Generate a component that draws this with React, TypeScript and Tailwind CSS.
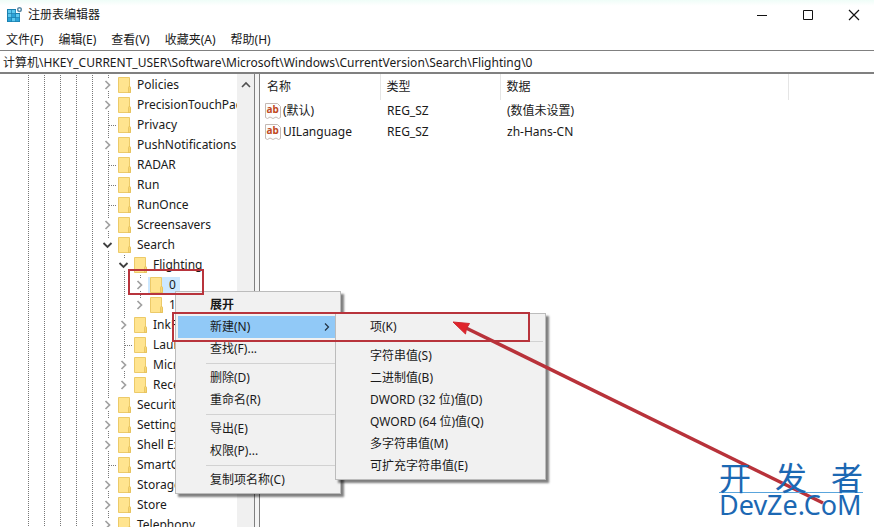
import { clsx } from "clsx";

type TreeNode = {
  name: string;
  level: number;
  state?: "open" | "closed";
  selected?: boolean;
  last?: boolean;
};

type MenuEntry = {
  label: string;
  bold?: boolean;
  active?: boolean;
  submenu?: boolean;
} | null;

const menuBar = ["文件(F)", "编辑(E)", "查看(V)", "收藏夹(A)", "帮助(H)"];

const nodes: TreeNode[] = [
  { name: "Policies", level: 5, state: "closed" },
  { name: "PrecisionTouchPad", level: 5, state: "closed" },
  { name: "Privacy", level: 5 },
  { name: "PushNotifications", level: 5, state: "closed" },
  { name: "RADAR", level: 5 },
  { name: "Run", level: 5 },
  { name: "RunOnce", level: 5 },
  { name: "Screensavers", level: 5, state: "closed" },
  { name: "Search", level: 5, state: "open" },
  { name: "Flighting", level: 6, state: "open" },
  { name: "0", level: 7, state: "closed", selected: true },
  { name: "1", level: 7, state: "closed", last: true },
  { name: "InkReco", level: 6, state: "closed" },
  { name: "Launch", level: 6 },
  { name: "Microsoft", level: 6, state: "closed" },
  { name: "RecentApps", level: 6, state: "closed", last: true },
  { name: "Security", level: 5, state: "closed" },
  { name: "Settings", level: 5, state: "closed" },
  { name: "Shell Ext", level: 5, state: "closed" },
  { name: "SmartGlass", level: 5 },
  { name: "Storage", level: 5, state: "closed" },
  { name: "Store", level: 5, state: "closed" },
  { name: "Telephony", level: 5, state: "closed" },
];

const values = [
  { name: "(默认)", type: "REG_SZ", data: "(数值未设置)" },
  { name: "UILanguage", type: "REG_SZ", data: "zh-Hans-CN" },
];

// null is a separator
const keyMenu: MenuEntry[] = [
  { label: "展开", bold: true },
  { label: "新建(N)", active: true, submenu: true },
  { label: "查找(F)..." },
  null,
  { label: "删除(D)" },
  { label: "重命名(R)" },
  null,
  { label: "导出(E)" },
  { label: "权限(P)..." },
  null,
  { label: "复制项名称(C)" },
];

const newMenu: MenuEntry[] = [
  { label: "项(K)" },
  null,
  { label: "字符串值(S)" },
  { label: "二进制值(B)" },
  { label: "DWORD (32 位)值(D)" },
  { label: "QWORD (64 位)值(Q)" },
  { label: "多字符串值(M)" },
  { label: "可扩充字符串值(E)" },
];

function RegeditIcon() {
  return (
    <svg className="size-4" viewBox="0 0 16 16">
      <path d="M0 2h9v4h4v9H0z" fill="#1a7fae" />
      <path
        d="M1 3h3.300v3.300H1zM5 3h3.300v3.300H5zM1 7h3.300v3.300H1zM9 7h3.300v3.300H9zM5 11h3.300v3.300H5z"
        fill="#5cc8ee"
      />
      <path d="M5 7h3.300v3.300H5zM1 11h3.300v3.300H1zM9 11h3.300v3.300H9z" fill="#2ba3d8" />
      <circle cx="12.500" cy="2.600" r="1.800" fill="#fff" stroke="#5c8ba6" strokeWidth="1.500" />
    </svg>
  );
}

function FolderIcon() {
  return (
    <svg className="h-4 w-[13px] shrink-0" viewBox="0 0 13 16">
      <path d="M.5.500h11v9.500l1 .5v5H.5z" fill="#ffe48f" stroke="#ecca69" />
      <path d="M10.500 15.500v-5l1-1.500 1 1.500v5z" fill="#f8d673" stroke="#e3bd58" strokeWidth=".7" />
    </svg>
  );
}

function StringValueIcon() {
  return (
    <svg className="size-4 shrink-0" viewBox="0 0 16 16">
      <path
        d="M.5.500h12l3 3v11l-2 1-2.500-1.500-3 1.500-3-1.500-2.500 1.500-2-1z"
        fill="#fdfdfd"
        stroke="#c4b9b4"
      />
      <text
        x="1.500"
        y="10"
        fill="#c14a22"
        fontSize="10"
        fontWeight="700"
        fontFamily="Noto Sans, sans-serif"
      >
        ab
      </text>
    </svg>
  );
}

function Guide() {
  return (
    <svg className="h-5 w-4 shrink-0" viewBox="0 0 16 20">
      <path d="M8.500 0v20" stroke="#777" strokeDasharray="1 1" />
    </svg>
  );
}

// the branch of the last child has no line below it
function Expander({ state, last }: Pick<TreeNode, "state" | "last">) {
  if (!state) {
    return (
      <svg className="h-5 w-4 shrink-0" viewBox="0 0 16 20">
        <path d="M8.500 0v20M9 10.500h7" fill="none" stroke="#777" strokeDasharray="1 1" />
      </svg>
    );
  }
  return (
    <svg className="h-5 w-4 shrink-0" viewBox="0 0 16 20" fill="none">
      <path
        d={last ? "M8.500 0v4" : "M8.500 0v4M8.500 16v4"}
        stroke="#777"
        strokeDasharray="1 1"
      />
      {state === "open" ? (
        <path d="m3.500 8 4 4 4-4" stroke="#404040" strokeWidth="1.800" />
      ) : (
        <path d="m5.500 6 4 4-4 4" stroke="#a0a0a0" strokeWidth="1.700" />
      )}
    </svg>
  );
}

function TreeRow({ node }: { node: TreeNode }) {
  const guides = Array.from({ length: node.level });
  return (
    <li
      role="treeitem"
      aria-selected={!!node.selected}
      className="flex h-5 items-center whitespace-nowrap"
    >
      {guides.map((_, i) => (
        <Guide key={i} />
      ))}
      <Expander state={node.state} last={node.last} />
      <span
        className={clsx(
          "flex items-center gap-1.5 pr-1 pl-0.5",
          node.selected && "bg-[#cce8ff]"
        )}
      >
        <FolderIcon />
        <span className="leading-4">{node.name}</span>
      </span>
    </li>
  );
}

function Menu({ entries, className }: { entries: MenuEntry[]; className: string }) {
  return (
    <ul
      role="menu"
      className={clsx(
        "absolute border border-[#bcbcbc] bg-[#f1f1f1] p-0.5 shadow-[3px_3px_2px_#00000080]",
        className
      )}
    >
      {entries.map((entry, i) =>
        entry ? (
          <li key={i} role="none">
            <button
              type="button"
              role="menuitem"
              className={clsx(
                "flex h-[22px] w-full items-center justify-between pr-1.5 pl-8 whitespace-nowrap",
                entry.bold && "font-bold",
                entry.active && "bg-[#91c9f7]"
              )}
            >
              {entry.label}
              {entry.submenu && (
                <svg className="size-2.5" viewBox="0 0 10 10" fill="none">
                  <path d="m3 1.500 3.500 3.500L3 8.500" stroke="#234" strokeWidth="1.200" />
                </svg>
              )}
            </button>
          </li>
        ) : (
          <li key={i} role="separator" className="ml-7 py-[3px]">
            <div className="h-px bg-[#d2d2d2]" />
          </li>
        )
      )}
    </ul>
  );
}

export default function App() {
  return (
    <div className="relative flex h-screen flex-col overflow-hidden bg-white font-['Noto_Sans','Noto_Sans_CJK_SC',sans-serif] text-xs text-[#1a1a1a]">
      <header className="flex h-[29px] shrink-0 items-center bg-linear-to-b from-[#effdf8] to-white to-20% pl-[7px]">
        <RegeditIcon />
        <h1 className="ml-[5px] grow">注册表编辑器</h1>
        <div className="flex gap-1.5">
          <button type="button" aria-label="最小化" className="flex h-7 w-10 items-center justify-center">
            <svg className="size-3" viewBox="0 0 12 12">
              <path d="M1 6.500h10" stroke="#111" />
            </svg>
          </button>
          <button type="button" aria-label="最大化" className="flex h-7 w-10 items-center justify-center">
            <svg className="size-3" viewBox="0 0 12 12">
              <path d="M1.500 1.500h9v9h-9z" fill="none" stroke="#111" />
            </svg>
          </button>
          <button type="button" aria-label="关闭" className="flex h-7 w-10 items-center justify-center">
            <svg className="size-3" viewBox="0 0 12 12">
              <path d="m1 1 10 10M11 1 1 11" stroke="#111" strokeWidth="1.200" />
            </svg>
          </button>
        </div>
      </header>

      <nav className="flex h-[21px] shrink-0 items-center gap-[15px] pl-1.5">
        {menuBar.map((label) => (
          <button key={label} type="button">
            {label}
          </button>
        ))}
      </nav>

      <input
        aria-label="地址"
        readOnly
        defaultValue="计算机\HKEY_CURRENT_USER\Software\Microsoft\Windows\CurrentVersion\Search\Flighting\0"
        className="h-6 w-full shrink-0 border-t border-b-2 border-[#808080] pl-[3px] outline-none"
      />

      <main className="flex min-h-0 grow">
        <div className="flex w-[255px] shrink-0 border-r border-[#808080]">
          <ul role="tree" className="min-w-0 grow overflow-hidden pt-px pl-5">
            {nodes.map((node) => (
              <TreeRow key={node.name} node={node} />
            ))}
          </ul>
          <div className="w-[17px] shrink-0 bg-[#f0f0f0] pt-1.5">
            <svg className="mx-auto size-2.5" viewBox="0 0 10 10" fill="none">
              <path d="m1 7 4-4 4 4" stroke="#505050" strokeWidth="1.600" />
            </svg>
          </div>
        </div>
        <div className="w-1 shrink-0 bg-[#f4f4f4]" />
        <div className="grow border-l border-[#808080]">
          <table className="w-full table-fixed text-left">
            <thead>
              <tr className="h-[26px]">
                <th className="w-[120px] border-r border-[#e5e5e5] pl-[7px] font-normal">名称</th>
                <th className="w-[120px] border-r border-[#e5e5e5] pl-1.5 font-normal">类型</th>
                <th className="w-[288px] border-r border-[#e5e5e5] pl-1.5 font-normal">数据</th>
                <th />
              </tr>
            </thead>
            <tbody>
              {values.map((value) => (
                <tr key={value.name} className="h-[21px]">
                  <td className="pl-[5px]">
                    <span className="flex items-center gap-0.5">
                      <StringValueIcon />
                      {value.name}
                    </span>
                  </td>
                  <td className="pl-[7px]">{value.type}</td>
                  <td className="pl-[7px]">{value.data}</td>
                  <td />
                </tr>
              ))}
            </tbody>
          </table>
        </div>
      </main>

      <Menu entries={keyMenu} className="top-[291px] left-[175px] w-[166px]" />
      <Menu entries={newMenu} className="top-[313px] left-[335px] w-[211px]" />

      {/* annotations */}
      <div className="absolute top-[269px] left-[128px] h-[26px] w-[76px] border-2 border-[#b8343c]" />
      <div className="absolute top-[312px] left-[172px] h-[30px] w-[358px] border-2 border-[#b8343c]" />
      <svg className="pointer-events-none absolute top-0 left-0 h-[527px] w-[874px]" viewBox="0 0 874 527">
        <path d="M464 327 823 503" stroke="#b8323a" strokeWidth="3.500" />
        <path d="m453 322 16.500 1.500-3 5-1 5.500z" fill="#e0242b" stroke="#d0282f" />
      </svg>

      <div className="absolute right-[11px] bottom-2.5 w-36 text-[#1c68b3]">
        <div className="flex justify-between border-b border-[#5aa5dc] pb-0.5 font-['Noto_Sans_CJK_SC',sans-serif] text-[32px] leading-[28px]">
          <span>开</span>
          <span>发</span>
          <span>者</span>
        </div>
        <div className="text-[27px] leading-6">DevZe.CoM</div>
      </div>
    </div>
  );
}
